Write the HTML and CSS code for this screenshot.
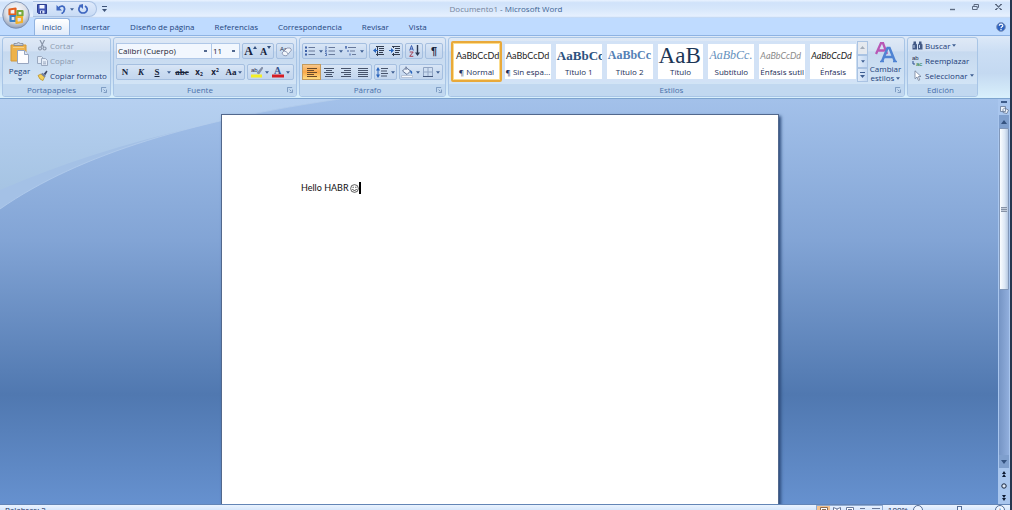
FILE: index.html
```html
<!DOCTYPE html>
<html lang="es">
<head>
<meta charset="utf-8">
<title>Documento1 - Microsoft Word</title>
<link rel="stylesheet" href="styles.css">
</head>
<body>
<svg class="defs" aria-hidden="true">
  <symbol id="caret" viewBox="0 0 5 3"><path d="M0 0h5L2.500 3z" fill="#3f5f92"/></symbol>
  <symbol id="launch" viewBox="0 0 7 7"><path d="M.5 6V.5H6M3 3l2 2M6.500 3v3.500H3" fill="none" stroke="#6f8fb8"/></symbol>
</svg>
<div class="app">
  <header class="titlebar">
    <button class="office" aria-label="Botón de Office">
      <svg viewBox="0 0 28 28" width="28" height="28">
        <defs><radialGradient id="orb" cx=".5" cy=".35" r=".65"><stop offset="0" stop-color="#fff"/><stop offset=".6" stop-color="#dcdfe6"/><stop offset="1" stop-color="#8f9cb4"/></radialGradient></defs>
        <circle cx="14" cy="14" r="13.300" fill="url(#orb)" stroke="#7389ad" stroke-width=".8"/>
        <g fill="none" stroke-width="2.200" stroke-linejoin="round">
          <path d="M7.500 8.500l6-1v6h-6z" stroke="#e2601e"/><path d="M15.500 10h5v4.500h-5z" stroke="#76a93b"/>
          <path d="M8.500 15h5v5h-5z" stroke="#3b7fc4"/><path d="M14.500 16h5.500v5l-5.500 1z" stroke="#f1b02c"/>
        </g>
      </svg>
    </button>
    <div class="quick">
      <button aria-label="Guardar"><svg viewBox="0 0 10 10" width="10" height="10"><path d="M.5.5h9v9h-8l-1-1z" fill="#4257b5" stroke="#2c3f91"/><path d="M2.500 1h5v3.500h-5z" fill="#f3f6ff"/><path d="M3 6.500h4.500v3H3z" fill="#dbe3f7"/><path d="M4 7h1.300v2.500H4z" fill="#29398a"/></svg></button>
      <button class="undo" aria-label="Deshacer"><svg viewBox="0 0 10 10" width="10" height="10"><path d="M2 4.500C5 .5 9 2 8.500 5.500 8.300 7.500 7 9 5.500 9.500" fill="none" stroke="#3f67c0" stroke-width="1.800"/><path d="M.5 1v5.500H6z" fill="#3f67c0"/></svg><svg class="caret"><use href="#caret"/></svg></button>
      <button aria-label="Repetir"><svg viewBox="0 0 10 10" width="10" height="10"><path d="M7 2C11 4.500 9 9 5 9S-.5 4.500 2.500 2" fill="none" stroke="#3f67c0" stroke-width="1.700"/><path d="M5 0v5L.8 1z" fill="#3f67c0"/></svg></button>
    </div>
    <button class="customize" aria-label="Personalizar"><svg viewBox="0 0 5 6" width="5" height="6"><path d="M0 .5h5" stroke="#3e5378"/><path d="M0 3h5L2.500 6z" fill="#3e5378"/></svg></button>
    <h1 class="title"><span>Documento1</span> - Microsoft Word</h1>
    <div class="window">
      <button aria-label="Minimizar"><svg viewBox="0 0 7 8" width="7" height="8"><path d="M1 6.500h5" stroke="#5d6b82" stroke-width="1.400"/></svg></button>
      <button aria-label="Restaurar"><svg viewBox="0 0 7 8" width="7" height="8"><path d="M2 3V1.500h4.500v3H5.500M.5 3.500h4.700v3H.5z" stroke="#5d6b82" fill="none"/></svg></button>
      <button aria-label="Cerrar"><svg viewBox="0 0 7 8" width="7" height="8"><path d="M1 1.500l5 5M6 1.500l-5 5M0 1.500h2M5 1.500h2M0 6.500h2M5 6.500h2" stroke="#5d6b82" stroke-width="1.200"/></svg></button>
    </div>
  </header>
  <nav class="tabs">
    <a href="#inicio" class="tab active">Inicio</a><a href="#insertar" class="tab">Insertar</a><a href="#diseno" class="tab">Diseño de página</a><a href="#referencias" class="tab">Referencias</a><a href="#correspondencia" class="tab">Correspondencia</a><a href="#revisar" class="tab">Revisar</a><a href="#vista" class="tab">Vista</a>
    <button class="help" aria-label="Ayuda"><svg viewBox="0 0 10 10" width="10" height="10"><circle cx="5" cy="5" r="4.400" fill="#2d62c0" stroke="#8197bd"/><path d="M3.300 3.800C3.300 1.500 7 1.700 6.800 3.800 6.600 5 5 4.800 5 6.300M5 7v1.300" stroke="#fff" stroke-width="1.200" fill="none"/></svg></button>
  </nav>
  <main class="ribbon" id="inicio">
    <section class="group clipboard">
      <div class="body">
        <button class="big paste">
          <svg viewBox="0 0 20 22" width="20" height="22"><path d="M1 3h15v16H1z" fill="#eeb24a" stroke="#d39a3c"/><path d="M4 3.500h9v-2h-2.500Q8.500-.5 6.500 1.500H4z" fill="#c9ced8" stroke="#7d8696" stroke-width=".8"/><path d="M3 5h11v1H3z" fill="#f7d186"/><path d="M7.500 8.500h7l4 4v9h-11z" fill="#fdfdff" stroke="#98a6c0"/><path d="M14.500 8.500v4h4" fill="#dce4f3" stroke="#98a6c0"/></svg>
          <span>Pegar</span><svg class="caret"><use href="#caret"/></svg>
        </button>
        <div class="stack">
          <button class="line off" disabled><svg viewBox="0 0 11 11" width="11" height="11"><path d="M3 0l3.500 7M7.500 0L4 7" stroke="#8b97aa" stroke-width="1.200"/><path d="M3 7a1.500 1.500 0 1 0 .1 0M7.500 7a1.500 1.500 0 1 0 .1 0" fill="none" stroke="#8b97aa" stroke-width="1.200"/></svg>Cortar</button>
          <button class="line off" disabled><svg viewBox="0 0 11 11" width="11" height="11"><path d="M.5 1.500h4l2 2v5h-6z" fill="#e5edf8" stroke="#9aa9c0"/><path d="M4.500 3.500h4l2 2v5h-6zM6 7h3M6 8.800h3" fill="#e5edf8" stroke="#9aa9c0"/></svg>Copiar</button>
          <button class="line"><svg viewBox="0 0 11 11" width="11" height="11"><path d="M1 5.500l3-1.500 3.500 3-1.500 3.500Q2.500 10 1 5.500z" fill="#f4cf57" stroke="#b58a23" stroke-width=".7"/><path d="M4 4l1.500-1.200L9 6 7.500 7.300z" fill="#7381a0"/><path d="M6.500 4L9.500.5l1 1L8.500 5z" fill="#3e4765"/></svg>Copiar formato</button>
        </div>
      </div>
      <footer><h2>Portapapeles</h2><button class="launch" aria-label="Abrir Portapapeles"><svg><use href="#launch"/></svg></button></footer>
    </section>

    <section class="group font">
      <div class="body rows">
        <div class="row">
          <div class="combos">
            <select class="face" aria-label="Fuente"><option>Calibri (Cuerpo)</option></select><select class="size" aria-label="Tamaño"><option>11</option></select>
          </div>
          <div class="box">
            <button class="serif grow" aria-label="Agrandar fuente">A<svg viewBox="0 0 4 3" width="4" height="3"><path d="M0 3h4L2 0z" fill="#334f7d"/></svg></button>
            <button class="serif shrink" aria-label="Encoger fuente">A<svg viewBox="0 0 4 3" width="4" height="3"><path d="M0 0h4L2 3z" fill="#334f7d"/></svg></button>
          </div>
          <div class="box"><button class="w16" aria-label="Borrar formato"><svg viewBox="0 0 13 12" width="13" height="12"><text x="1" y="6" class="tiny">Aa</text><path d="M3 8l5-5q4-1 4.500 2L8 10.500q-4 1-5-2.500z" fill="#f3f6fb" stroke="#7e8ca8" stroke-width=".8"/><path d="M5 6q3 0 4 3" fill="none" stroke="#7e8ca8" stroke-width=".8"/></svg></button></div>
        </div>
        <div class="row">
          <div class="box">
            <button class="serif w16">N</button><button class="serif w16"><i>K</i></button><button class="serif w16 under">S</button><button class="drop" aria-label="Subrayado"><svg class="caret"><use href="#caret"/></svg></button><button class="serif strike">abc</button><button class="sub">x<small>2</small></button><button class="sup">x<small>2</small></button><button class="serif case">Aa<svg class="caret"><use href="#caret"/></svg></button>
          </div>
          <div class="box colors">
            <button class="color" aria-label="Resaltado"><svg viewBox="0 0 12 12" width="12" height="12"><text x="0" y="6" class="tiny">ab</text><path d="M6 7l5-6 1 1-4 6z" fill="#8793ab" stroke="#5a6783" stroke-width=".4"/><path d="M0 8.500h11v3H0z" fill="#f4ef25"/></svg></button><svg class="caret"><use href="#caret"/></svg>
            <button class="color" aria-label="Color de fuente"><svg viewBox="0 0 12 12" width="12" height="12"><text x="2" y="8" class="letter">A</text><path d="M0 8.500h12v3H0z" fill="#d51d25"/></svg></button><svg class="caret"><use href="#caret"/></svg>
          </div>
        </div>
      </div>
      <footer><h2>Fuente</h2><button class="launch" aria-label="Abrir Fuente"><svg><use href="#launch"/></svg></button></footer>
    </section>

    <section class="group para">
      <div class="body rows">
        <div class="row">
          <div class="box lists">
            <button aria-label="Viñetas"><svg viewBox="0 0 10 10" width="10" height="10"><path d="M3.500 1.500H10M3.500 5H10M3.500 8.500H10" stroke="#68799a"/><path d="M0 .5h2v2H0zM0 4h2v2H0zM0 7.500h2v2H0z" fill="#3c5fa6"/></svg><svg class="caret"><use href="#caret"/></svg></button>
            <button aria-label="Numeración"><svg viewBox="0 0 10 10" width="10" height="10"><path d="M3.500 1.500H10M3.500 5H10M3.500 8.500H10" stroke="#68799a"/><path d="M1 0v3M0 4h1.500L.3 6H2M0 7.500h1.500v2.200H0" fill="none" stroke="#3c5fa6" stroke-width=".8"/></svg><svg class="caret"><use href="#caret"/></svg></button>
            <button aria-label="Lista multinivel"><svg viewBox="0 0 11 10" width="11" height="10"><path d="M3 1.500h8M5 5h5M7 8.500h4" stroke="#68799a"/><path d="M0 1h2M1 0v3M3 4v2M5 7.500v2" stroke="#3c5fa6"/></svg><svg class="caret"><use href="#caret"/></svg></button>
          </div>
          <div class="box">
            <button class="w16" aria-label="Disminuir sangría"><svg viewBox="0 0 11 10" width="11" height="10"><path d="M3 .5h8M6 2.500h5M6 4.500h5M6 6.500h4M3 8.500h8M4.500 0v10" stroke="#333d50"/><path d="M0 4.500L3 2v2h2v1H3v2z" fill="#2864bc"/></svg></button><button class="w16" aria-label="Aumentar sangría"><svg viewBox="0 0 11 10" width="11" height="10"><path d="M3 .5h8M6 2.500h5M6 4.500h5M6 6.500h4M3 8.500h8M4.500 0v2M4.500 7v3" stroke="#333d50"/><path d="M5 4.500L2 2v2H0v1h2v2z" fill="#2864bc"/></svg></button>
          </div>
          <div class="box"><button class="w16" aria-label="Ordenar"><svg viewBox="0 0 11 12" width="11" height="12"><path d="M.7 5.500L2.500.5l1.800 5M1.200 4h2.600" stroke="#355ab0" fill="none"/><path d="M.7 7h3.500L.7 11.300h3.600" stroke="#a64256" fill="none"/><path d="M8.500 0v9" stroke="#29364f" stroke-width="1.400"/><path d="M6 7.500h5L8.500 11z" fill="#29364f"/></svg></button></div>
          <div class="box"><button class="w16 mark" aria-label="Mostrar todo">¶</button></div>
        </div>
        <div class="row">
          <div class="box aligns">
            <button class="w16 on" aria-label="Izquierda"><svg viewBox="0 0 10 9" width="10" height="9"><path d="M0 .5h10M0 2.500h7M0 4.500h10M0 6.500h7M0 8.500h10" stroke="#6b4a29"/></svg></button><button class="w16" aria-label="Centrar"><svg viewBox="0 0 10 9" width="10" height="9"><path d="M0 .5h10M2 2.500h6M0 4.500h10M2 6.500h6M1 8.500h8" stroke="#46536b"/></svg></button><button class="w16" aria-label="Derecha"><svg viewBox="0 0 10 9" width="10" height="9"><path d="M0 .5h10M3 2.500h7M0 4.500h10M3 6.500h7M0 8.500h10" stroke="#46536b"/></svg></button><button class="w16" aria-label="Justificar"><svg viewBox="0 0 10 9" width="10" height="9"><path d="M0 .5h10M0 2.500h10M0 4.500h10M0 6.500h10M0 8.500h10" stroke="#46536b"/></svg></button>
          </div>
          <div class="box"><button class="combo" aria-label="Interlineado"><svg viewBox="0 0 12 11" width="12" height="11"><path d="M5 1.500h7M5 4h6M5 6.500h7M5 9h6" stroke="#46536b"/><path d="M2 2v7" stroke="#2864bc"/><path d="M0 3.500h4L2 0zM0 7.500h4L2 11z" fill="#2864bc"/></svg><svg class="caret"><use href="#caret"/></svg></button></div>
          <div class="box">
            <button class="combo" aria-label="Sombreado"><svg viewBox="0 0 12 12" width="12" height="12"><path d="M1.500 5L5 1.500 9.500 5 6 8.500z" fill="#eef3fa" stroke="#647596"/><path d="M5 4V.5" stroke="#647596"/><path d="M9 4q3 1 2 4-2-1-2-4z" fill="#2864bc"/><path d="M.5 9.500h11v2H.5z" fill="#f6f8fc" stroke="#a8b5ca" stroke-width=".7"/></svg><svg class="caret"><use href="#caret"/></svg></button><button class="combo" aria-label="Bordes"><svg viewBox="0 0 10 10" width="10" height="10"><path d="M.5 9V.5h9V9M5 .5V9M.5 5h9" stroke="#91a5c4" fill="none"/><path d="M0 9.500h10" stroke="#44577c"/></svg><svg class="caret"><use href="#caret"/></svg></button>
          </div>
        </div>
      </div>
      <footer><h2>Párrafo</h2><button class="launch" aria-label="Abrir Párrafo"><svg><use href="#launch"/></svg></button></footer>
    </section>

    <section class="group styles">
      <div class="body">
        <div class="gallery">
          <button class="tile on"><span class="sample">AaBbCcDd</span><span class="name">¶ Normal</span></button>
          <button class="tile"><span class="sample">AaBbCcDd</span><span class="name">¶ Sin espa...</span></button>
          <button class="tile"><span class="sample h1">AaBbCc</span><span class="name">Título 1</span></button>
          <button class="tile"><span class="sample h2">AaBbCc</span><span class="name">Título 2</span></button>
          <button class="tile"><span class="sample huge">AaB</span><span class="name">Título</span></button>
          <button class="tile"><span class="sample subt">AaBbCc.</span><span class="name">Subtítulo</span></button>
          <button class="tile"><span class="sample subtle">AaBbCcDd</span><span class="name">Énfasis sutil</span></button>
          <button class="tile"><span class="sample emph">AaBbCcDd</span><span class="name">Énfasis</span></button>
        </div>
        <div class="updown">
          <button class="dim" aria-label="Subir"><svg viewBox="0 0 5 3" width="5" height="3"><path d="M0 3h5L2.500 0z" fill="#a4adba"/></svg></button><button aria-label="Bajar"><svg class="caret"><use href="#caret"/></svg></button><button aria-label="Más"><svg viewBox="0 0 5 6" width="5" height="6"><path d="M0 .5h5" stroke="#3f5f92"/><path d="M0 3h5L2.500 6z" fill="#3f5f92"/></svg></button>
        </div>
        <button class="big change">
          <svg viewBox="0 0 22 21" width="22" height="21"><path d="M1 12L6 1h2l4 11M3.500 8.500h6" fill="none" stroke="#b857b5" stroke-width="2.300"/><path d="M7 19.500L12.500 6h2l5.500 13.500M9.500 15h8" fill="none" stroke="#4f83d3" stroke-width="2.500"/><path d="M5 19.500h4M18 19.500h4" stroke="#4f83d3" stroke-width="1.500"/></svg>
          <span>Cambiar<br>estilos <svg class="caret"><use href="#caret"/></svg></span>
        </button>
      </div>
      <footer><h2>Estilos</h2><button class="launch" aria-label="Abrir Estilos"><svg><use href="#launch"/></svg></button></footer>
    </section>

    <section class="group edit">
      <div class="body">
        <div class="stack">
          <button class="line"><svg viewBox="0 0 11 11" width="11" height="11"><path d="M1.500 1.500h2.500v2l1 1v5H.5v-5l1-1zM7 1.500h2.500v2l1 1v5H6v-5l1-1z" fill="#435a86"/><path d="M2 5v3M7.500 5v3" stroke="#c2d3ee"/></svg>Buscar <svg class="caret"><use href="#caret"/></svg></button>
          <button class="line"><svg viewBox="0 0 11 11" width="11" height="11"><text x="0" y="5" class="tiny">ab</text><text x="4" y="11" class="tiny green">ac</text><path d="M1 6v3h2" stroke="#2f4f8f" fill="none"/></svg>Reemplazar</button>
          <button class="line"><svg viewBox="0 0 11 11" width="11" height="11"><path d="M3 .8v8l2-1.800 1.500 3.500 1.300-.6L6.400 6.500H9z" fill="#fff" stroke="#71809b" stroke-width=".8"/></svg>Seleccionar <svg class="caret"><use href="#caret"/></svg></button>
        </div>
      </div>
      <footer><h2>Edición</h2></footer>
    </section>
  </main>

  <div class="work">
    <svg class="swoosh" viewBox="0 0 420 120" width="420" height="120" aria-hidden="true">
      <defs><linearGradient id="sky" x1="0" y1="0" x2="0" y2="1"><stop offset="0" stop-color="#b6d0f1"/><stop offset="1" stop-color="#a6c4e3"/></linearGradient></defs>
      <path d="M0 0H340C200 20 80 54 0 110z" fill="#a4c1e6"/>
      <path d="M0 0H340Q260 11 200 27 90 52 0 91z" fill="url(#sky)"/>
      <path d="M340 0C200 20 80 54 0 110" fill="none" stroke="#b4cdec" stroke-width=".8"/>
    </svg>
    <div class="canvas">
      <article class="page"><p contenteditable="true" spellcheck="false">Hello HABR <svg viewBox="0 0 10 10" width="9" height="9"><circle cx="5" cy="5" r="4.300" fill="none" stroke="#222" stroke-width=".8"/><path d="M3.500 3v1.500M6.500 3v1.500M2.500 6q2.500 2.500 5 0" fill="none" stroke="#222" stroke-width=".9"/></svg><span class="cursor"></span></p></article>
    </div>
    <aside class="scroll">
      <button class="split" aria-label="Dividir"></button>
      <button class="ruler" aria-label="Regla"><svg viewBox="0 0 9 9" width="9" height="9"><path d="M.5 1.500h5v5h-5zM3 4.500l1.500-1.500 4 2-1.500 3.500-4-1z" fill="#edf3fb" stroke="#657794" stroke-width=".8"/></svg></button>
      <div class="track">
        <button class="arrow" aria-label="Arriba"><svg viewBox="0 0 6 4" width="6" height="4"><path d="M0 4h6L3 0z" fill="#34527f"/></svg></button>
        <div class="thumb"><i></i></div>
        <button class="arrow end" aria-label="Abajo"><svg viewBox="0 0 6 4" width="6" height="4"><path d="M0 0h6L3 4z" fill="#34527f"/></svg></button>
      </div>
      <button class="jump" aria-label="Página anterior"><svg viewBox="0 0 4 6" width="4" height="6"><path d="M0 3h4L2 0zM0 6h4L2 3z" fill="#0d1a33"/></svg></button>
      <button class="jump" aria-label="Seleccionar objeto"><svg viewBox="0 0 6 6" width="6" height="6"><circle cx="3" cy="3" r="2.200" fill="#dce8f8" stroke="#16233c"/></svg></button>
      <button class="jump" aria-label="Página siguiente"><svg viewBox="0 0 4 6" width="4" height="6"><path d="M0 0h4L2 3zM0 3h4L2 6z" fill="#0d1a33"/></svg></button>
    </aside>
  </div>

  <footer class="status">
    <span class="words">Palabras: 2</span>
    <div class="views">
      <button class="on" aria-label="Diseño de impresión"><svg viewBox="0 0 8 8" width="8" height="8"><path d="M.5.5h7v7h-7zM2 2.500h4M2 4.500h4" fill="#fff" stroke="#8b6b51"/></svg></button><button aria-label="Lectura"><svg viewBox="0 0 8 8" width="8" height="8"><path d="M.5.5L4 2 7.500.5v6L4 8 .5 6.500zM4 2v5" fill="#fff" stroke="#68799a"/></svg></button><button aria-label="Web"><svg viewBox="0 0 8 8" width="8" height="8"><path d="M.5.5h7v7h-7zM2 2.500h4" fill="#fff" stroke="#68799a"/></svg></button><button aria-label="Esquema"><svg viewBox="0 0 8 8" width="8" height="8"><path d="M1 1.500h5M2 4.500h5" stroke="#68799a"/></svg></button><button aria-label="Borrador"><svg viewBox="0 0 8 8" width="8" height="8"><path d="M0 1.500h8M0 4.500h8" stroke="#68799a"/></svg></button>
    </div>
    <span class="percent">100%</span>
    <button class="round" aria-label="Alejar">−</button>
    <input type="range" aria-label="Zoom" value="50">
    <button class="round" aria-label="Acercar">+</button>
  </footer>
</div>
</body>
</html>
```
FILE: styles.css
```css
* { box-sizing: border-box; }
body { margin: 0; background: #26364f; font: 8px/10px "Open Sans", "Noto Sans", sans-serif; color: #1e3c78; }
button { display: flex; align-items: center; justify-content: center; margin: 0; padding: 0; border: 0; background: none; font: inherit; color: inherit; white-space: nowrap; }
svg { flex: none; }
h1, h2, p { margin: 0; font: inherit; }
.defs { position: absolute; width: 0; height: 0; }
.caret { width: 4px; height: 3px; }
.tiny { font: 6px "Liberation Sans", sans-serif; fill: #1f2c49; }
.green { fill: #247a39; }
.letter { font: bold 10px "Liberation Serif", serif; fill: #34528c; }
.app { display: flex; flex-direction: column; height: 100vh; margin-right: 2px; overflow: hidden; background: #bfdbff; }

.titlebar { position: relative; flex: none; display: flex; align-items: center; height: 18px; padding: 0 8px 0 33px; background: linear-gradient(#eaf3ff 0, #d0e2fa 15%, #d7e7fb 50%, #e6f0fe 90%, #b9d2f2); }
.office { position: absolute; left: 2px; top: 1px; z-index: 2; }
.quick { display: flex; align-items: center; gap: 9px; height: 16px; padding: 0 8px 0 4px; border: 1px solid #a9c1e3; border-left: 0; border-radius: 0 8px 8px 0; background: linear-gradient(#dfeafb, #c8dbf5); }
.quick button:last-child { margin-left: -5px; }
.undo { gap: 4px; }
.customize { margin-left: 5px; }
.title { flex: 1; text-align: center; line-height: 18px; color: #3f6595; padding-right: 44px; }
.title span { color: #74839b; }
.window { display: flex; gap: 16px; align-self: flex-start; padding-top: 3px; }

.tabs { flex: none; display: flex; align-items: flex-end; height: 18px; padding: 0 4px 0 34px; border-bottom: 1px solid #8eb3e3; }
.tab { padding: 0 9px; height: 16px; line-height: 14px; color: #244580; text-decoration: none; border: 1px solid transparent; border-bottom: 0; }
.tab.active { padding: 1px 7px 0; margin-right: 1px; height: 17px; background: linear-gradient(#fff, #dfeafa); border-color: #91b3e0; border-radius: 3px 3px 0 0; }
.help { margin-left: auto; align-self: center; }

.ribbon { flex: none; display: flex; gap: 2px; padding: 1px 2px; height: 63px; background: linear-gradient(#dde9f8 0, #cbdef4 25%, #c4d9f1 60%, #d9f0fc); border-bottom: 1px solid #7da4cf; }
.group { flex: none; display: flex; flex-direction: column; border: 1px solid #a8c5e6; border-radius: 3px; background: linear-gradient(#dfe9f6 0, #d3e1f3 22%, #c6d9ef 24%, #d6e8f8); overflow: hidden; }
.clipboard { width: 109px; }
.font { width: 184px; }
.para { width: 147px; }
.styles { width: 457px; }
.edit { width: 71px; }
.group .body { flex: 1; display: flex; }
.group footer { display: flex; align-items: center; height: 12px; padding: 0 3px; background: #c1d8f0; color: #4a70aa; }
.group h2 { flex: 1; text-align: center; line-height: 12px; padding-right: 4px; }
.launch svg { width: 6px; height: 6px; }
.big { flex-direction: column; color: #223f7a; }
.paste { width: 33px; gap: 2px; }
.stack { display: flex; flex-direction: column; justify-content: space-around; padding: 0 0 1px 1px; }
.line { justify-content: flex-start; gap: 2px; height: 15px; }
.off { color: #8d9bb0; }

.body.rows { flex-direction: column; gap: 5px; padding: 5px 2px 0; }
.row { display: flex; gap: 2px; height: 16px; }
.box { display: flex; align-items: center; border: 1px solid #a5bfe0; border-radius: 2px; background: linear-gradient(#d9e6f6 0, #cbdcf1 50%, #c3d6ee); }
.box button { height: 14px; color: #17233b; }
.combos { display: flex; width: 127px; }
select { appearance: none; height: 16px; margin: 0; padding: 0 1px; border: 1px solid #b0c8e8; border-radius: 0; font: inherit; color: #1b2433; background: #f2f7fe linear-gradient(#52688f, #52688f) right 4px center / 3px 2px no-repeat; }
.face { width: 96px; }
.size { flex: 1; border-left: 0; }
.serif { font: bold 9px "Liberation Serif", serif; }
.box .grow, .box .shrink { width: 15px; font-size: 12px; }
.box .shrink { font-size: 10px; }
.grow svg, .shrink svg { align-self: flex-start; margin-top: 2px; }
.w16 { width: 16px; }
.under { text-decoration: underline; }
.drop { width: 8px; }
.strike { width: 18px; text-decoration: line-through; }
.sub, .sup { width: 16px; font-weight: bold; }
.sub small, .sup small { font-size: 5px; }
.sub small { align-self: flex-end; }
.sup small { align-self: flex-start; }
.case { width: 21px; gap: 1px; }
.colors { flex: none; width: 47px; justify-content: space-evenly; }
.lists { width: 71px; justify-content: space-evenly; }
.lists button { gap: 4px; }
.box .mark { font: bold 11px "Liberation Sans", sans-serif; }
.aligns .w16 { width: 17px; }
.combo { width: 21px; gap: 3px; }
.box .on { background: linear-gradient(#f9c78a, #f9a94a 50%, #fedc82); box-shadow: 0 0 0 1px #c49a5c; }

.styles .body { padding: 3px 2px 2px; gap: 1px; }
.gallery { display: flex; gap: 5px; width: 405px; background: #d2e2f6; }
.tile { flex: 1; min-width: 0; flex-direction: column; margin: 3px 0; background: #fff; color: #222d57; overflow: hidden; }
.tile.on { flex: 0 0 51px; margin: 0 -2px 0 0; border: 2px solid #e9a93a; border-radius: 2px; box-shadow: inset 0 0 0 1px #fbdc8c; }
.sample { display: flex; align-items: center; width: 100%; height: 20px; padding-left: 1px; overflow: hidden; font: 9px "Lato", sans-serif; color: #222; }
.tile.on .sample { padding-left: 3px; }
.name { line-height: 12px; }
.h1 { font: bold 13px "Liberation Serif", serif; color: #2c527f; }
.h2 { font: bold 12px "Liberation Serif", serif; color: #5481b6; }
.huge { font: 23px "Liberation Serif", serif; color: #1c3656; }
.subt { font: italic 12px "Liberation Serif", serif; color: #6490bd; }
.subtle { font-style: italic; color: #8b8b8b; }
.emph { font-style: italic; }
.updown { display: flex; flex-direction: column; width: 11px; }
.updown button { flex: 1; border: 1px solid #aac3e3; background: linear-gradient(90deg, #e0ebf9, #c5d9f2); }
.updown .dim { background: #e5e9ef; }
.change { flex: 1; gap: 1px; text-align: center; line-height: 9px; }
.change .caret { vertical-align: middle; }
.edit .stack { padding-left: 4px; }

.work { position: relative; flex: 1; min-height: 0; display: flex; background: linear-gradient(#a3c1ea 0, #82a4d5 35%, #5078b0 73%, #6691cf 100%); }
.swoosh { position: absolute; left: 0; top: 0; }
.canvas { position: relative; flex: 1; display: flex; justify-content: center; padding: 15px 0 0 2px; overflow: hidden; }
.page { width: 558px; padding: 67px 79px; background: #fff; border: 1px solid #52688d; border-bottom: 0; box-shadow: 2px 2px 3px #2d4c7c; font: 9px/12px "Lato", sans-serif; color: #111; }
.page p { display: flex; align-items: center; gap: 1px; outline: 0; }
.cursor { width: 2px; height: 12px; margin-left: -1px; background: #000; }
.scroll { position: relative; flex: none; display: flex; flex-direction: column; width: 12px; padding: 2px 1px 0; background: #a9c6ee; }
.split { height: 2px; margin: 0 2px; background: #3d5b89; }
.ruler { height: 12px; }
.track { flex: 1; display: flex; flex-direction: column; background: linear-gradient(90deg, #7594c4, #91afdd); }
.arrow { height: 13px; background: #7f9fcd; }
.end { margin-top: auto; }
.thumb { display: flex; align-items: center; justify-content: center; height: 162px; border: 1px solid #8197b9; border-radius: 1px; background: linear-gradient(90deg, #fbfdff, #dce7f5 60%, #b5c7e0); }
.thumb i { width: 6px; height: 5px; background: repeating-linear-gradient(#8793a7 0 1px, #c2cbd9 1px 2px); }
.jump { height: 12px; }

.status { flex: none; display: flex; align-items: flex-start; height: 20px; margin-bottom: -14px; padding: 0 5px; border-top: 1px solid #6385b6; background: linear-gradient(#eaf3ff 0, #c6dcf8 50%, #b2cef2); color: #17305e; }
.words { flex: 1; }
.views { display: flex; border: 1px solid #8faad0; }
.views button { width: 13px; height: 10px; }
.views .on { background: #f6c48f; }
.percent { width: 30px; text-align: center; }
.round { width: 10px; height: 10px; border: 1px solid #546d96; border-radius: 50%; background: #eef5ff; }
.status input { appearance: none; width: 72px; height: 10px; margin: 0; background: linear-gradient(#7e98bf, #7e98bf) center / 100% 1px no-repeat; }
.status input::-webkit-slider-thumb { appearance: none; width: 5px; height: 9px; border: 1px solid #546d96; background: #eef5ff; }
```
